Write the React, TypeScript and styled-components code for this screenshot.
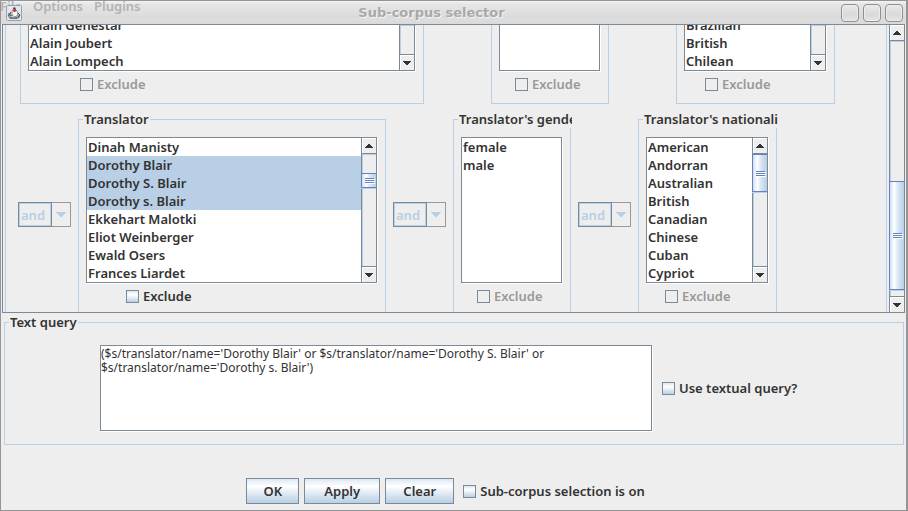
import React, { useState } from 'react';
import styled, { createGlobalStyle, css } from 'styled-components';

const slate = '#7a8a99';
const pale = '#b8cfe5';
const face = '#eeeeee';
const ink = '#333333';
const disabledInk = '#999999';
const thumbEdge = '#6382bf';

const GlobalStyle = createGlobalStyle`
  * { box-sizing: border-box; }
  body {
    margin: 0;
    background: ${face};
    color: ${ink};
    font: 600 13px/18px 'Noto Sans', 'Open Sans', sans-serif;
  }
  button, select, textarea, input { font: inherit; color: inherit; margin: 0; }
`;

const Window = styled.main`
  display: flex;
  flex-direction: column;
  min-height: 100vh;
  border: 1px solid #959595;
  border-right-width: 2px;
`;

const TitleBar = styled.header`
  position: relative;
  display: flex;
  align-items: center;
  height: 23px;
  padding: 0 3px 0 5px;
  background: linear-gradient(#f4f4f4 0, #e6e6e6 3px, #dcdcdc 15px, #d6d6d6 16px, #dedede 17px, #dadada 100%);
`;

const GhostMenu = styled.nav`
  position: absolute;
  left: -1px;
  top: -1px;
  display: flex;
  gap: 11px;
  line-height: 12px;
  color: #b2b2b2;
`;

const AppIcon = styled.svg`
  position: relative;
  flex: none;
`;

const Title = styled.h1`
  position: relative;
  flex: 1;
  margin: 0;
  text-align: center;
  font: bold 13px/16px 'DejaVu Sans', sans-serif;
  color: #a9a9a9;
  text-shadow: 1px 1px 0 #f5f5f5;
`;

const WindowButtons = styled.div`
  display: flex;
  gap: 4px;
`;

const WindowButton = styled.button`
  width: 18px;
  height: 18px;
  padding: 0;
  border: 1px solid #8f8f8f;
  border-radius: 4px;
  background: linear-gradient(#e9e9e9, #d9d9d9 60%, #e6e6e6);
  box-shadow: inset 0 0 0 1px #ededed;
`;

const ScrollPane = styled.section`
  display: flex;
  flex: 1;
  margin: 0 1px;
  border: 1px solid ${slate};
  min-height: 0;
`;

const Viewport = styled.div`
  display: flex;
  flex-direction: column;
  flex: 1;
  min-width: 0;
  margin: 0 2px;
  border: solid ${pale};
  border-width: 0 1px;
  overflow: hidden;
`;

const FilterRow = styled.div<{ $indent: number; $gap: number }>`
  display: flex;
  align-items: stretch;
  gap: ${p => p.$gap}px;
  padding-left: ${p => p.$indent}px;
`;

const UpperRow = styled(FilterRow)`
  margin-bottom: 8px;
`;

const LowerRow = styled(FilterRow)`
  flex: 1;
  align-items: stretch;
`;

const Group = styled.section<{ $width: number; $open?: boolean }>`
  position: relative;
  display: flex;
  flex-direction: column;
  width: ${p => p.$width}px;
  padding: 0 8px 5px 7px;
  border: 1px solid ${pale};
  border-top-width: 0;
  ${p =>
    p.$open &&
    css`
      margin-top: 7px;
      padding-top: 17px;
      padding-bottom: 0;
      border-top-width: 1px;
      border-bottom-width: 0;
    `}
`;

const GroupTitle = styled.h2`
  position: absolute;
  left: 4px;
  top: -9px;
  max-width: calc(100% - 2px);
  height: 17px;
  margin: 0;
  padding: 0 1px;
  overflow: hidden;
  white-space: nowrap;
  font: inherit;
  line-height: 17px;
  background: ${face};
`;

const ListFrame = styled.div<{ $cut?: boolean }>`
  display: flex;
  height: ${p => (p.$cut ? 46 : 146)}px;
  border: 1px solid ${slate};
  border-top-width: ${p => (p.$cut ? 0 : 1)}px;
  background: #fff;
  box-shadow: 1px 1px 0 #fff;
`;

const List = styled.ul<{ $cut?: boolean }>`
  display: flex;
  flex-direction: column;
  justify-content: ${p => (p.$cut ? 'flex-end' : 'flex-start')};
  flex: 1;
  min-width: 0;
  margin: 0;
  padding: 0;
  list-style: none;
  overflow: hidden;
`;

const Item = styled.li<{ $on: boolean }>`
  flex: none;
  height: 18px;
  padding-left: 1px;
  line-height: 19px;
  white-space: nowrap;
  cursor: default;
  background: ${p => (p.$on ? pale : 'transparent')};
`;

const Bar = styled.div`
  display: flex;
  flex-direction: column;
  width: 15px;
  border-left: 1px solid ${slate};
  background: ${face};
`;

const Arrow = styled.button<{ $down?: boolean }>`
  display: flex;
  align-items: center;
  justify-content: center;
  flex: none;
  height: 16px;
  padding: 0;
  border: 0 solid ${slate};
  border-width: ${p => (p.$down ? '1px 0 0' : '0 0 1px')};
  background: ${face};
  box-shadow: inset 1px 1px 0 #fff;
`;

const Track = styled.div<{ $lead: number }>`
  flex: 1;
  display: flex;
  flex-direction: column;
  padding-top: ${p => p.$lead}px;
  box-shadow: inset 1px 1px 0 ${pale};
`;

const Thumb = styled.div<{ $size: number }>`
  display: flex;
  flex-direction: column;
  align-items: center;
  justify-content: center;
  gap: 1px;
  height: ${p => p.$size}px;
  margin-left: -1px;
  border: 1px solid ${thumbEdge};
  border-right-width: 0;
  background: linear-gradient(90deg, #cfdfee, #ffffff 30%, #dbe7f3 55%, ${pale});
  box-shadow: 0 1px 0 ${pale};
`;

const Grip = styled.span`
  width: 9px;
  height: 1px;
  background: ${thumbEdge};
  box-shadow: 1px 1px 0 #fff;
`;

const CheckLabel = styled.label<{ $off?: boolean }>`
  display: flex;
  align-items: center;
  gap: 4px;
  white-space: nowrap;
  color: ${p => (p.$off ? disabledInk : ink)};
`;

const CheckRow = styled.div<{ $indent: number }>`
  padding: 4px 0 5px ${p => p.$indent}px;
`;

const CheckBox = styled.input`
  appearance: none;
  width: 13px;
  height: 13px;
  border: 1px solid ${slate};
  background: linear-gradient(#dde8f3, #ffffff 35%, ${pale});
  &:disabled { background: ${face}; }
  &:checked { background: ${slate}; }
`;

const Operator = styled.div`
  position: relative;
  align-self: flex-start;
  width: 53px;
  height: 25px;
  margin-top: 90px;
  flex: none;
`;

const OperatorSelect = styled.select`
  appearance: none;
  width: 100%;
  height: 100%;
  padding: 0 0 0 2px;
  border: 1px solid ${disabledInk};
  border-radius: 0;
  background: linear-gradient(${disabledInk}, ${disabledInk}) 32px 0 / 1px 100% no-repeat ${face};
  &:disabled { color: ${pale}; opacity: 1; }
`;

const OperatorRing = styled.span`
  position: absolute;
  inset: 0 19px 0 0;
  border: 1px solid ${slate};
  box-shadow: inset 0 0 0 1px ${pale};
  pointer-events: none;
`;

const OperatorArrow = styled.svg`
  position: absolute;
  right: 5px;
  top: 10px;
  pointer-events: none;
`;

const QueryGroup = styled.section`
  position: relative;
  display: flex;
  align-items: center;
  gap: 10px;
  height: 123px;
  margin: 9px 2px 0 3px;
  padding: 22px 8px 13px 95px;
  border: 1px solid ${pale};
`;

const QueryText = styled.textarea`
  flex: 1;
  align-self: stretch;
  min-width: 0;
  padding: 1px 0;
  border: 1px solid ${slate};
  border-radius: 0;
  outline: none;
  resize: none;
  background: #fff;
  box-shadow: 1px 1px 0 #fff;
  font: 400 12px/14px 'Noto Sans', sans-serif;
`;

const QuerySide = styled.div`
  flex: none;
  width: 233px;
`;

const Footer = styled.footer`
  display: flex;
  justify-content: center;
  align-items: center;
  gap: 5px;
  padding: 33px 0 6px;
`;

const PushButton = styled.button<{ $width: number }>`
  width: ${p => p.$width}px;
  height: 26px;
  padding: 0;
  border: 1px solid ${slate};
  background: linear-gradient(#dde8f3, #ffffff 30%, #dbe6f1 65%, ${pale});
`;

const FooterCheck = styled.div`
  padding: 0 16px 0 4px;
`;

function ArrowButton({ down }: { down?: boolean }) {
  return (
    <Arrow $down={down} type="button" aria-label={down ? 'Scroll down' : 'Scroll up'}>
      <svg width="8" height="4" viewBox="0 0 8 4" shapeRendering="crispEdges" fill={ink}>
        <path d={down ? 'M0 0h8v1H7v1H6v1H5v1H3V3H2V2H1V1H0z' : 'M0 4h8V3H7V2H6V1H5V0H3v1H2v1H1v1H0z'} />
      </svg>
    </Arrow>
  );
}

interface BarSpec { lead: number; size: number }

function ScrollBar({ spec, cut }: { spec?: BarSpec; cut?: boolean }) {
  return (
    <Bar>
      {!cut && <ArrowButton />}
      <Track $lead={spec ? spec.lead : 0}>
        {spec && (
          <Thumb $size={spec.size}>
            <Grip /><Grip /><Grip />
          </Thumb>
        )}
      </Track>
      <ArrowButton down />
    </Bar>
  );
}

interface FilterProps {
  title: string;
  width: number;
  items: string[];
  selected?: string[];
  checkIndent: number;
  cut?: boolean;
  bar?: boolean;
  spec?: BarSpec;
  enabled?: boolean;
}

function Filter({ title, width, items, selected = [], checkIndent, cut, bar, spec, enabled }: FilterProps) {
  const [chosen, setChosen] = useState(selected);
  const toggle = (name: string) =>
    setChosen(c => (c.includes(name) ? c.filter(n => n !== name) : [...c, name]));
  return (
    <Group $width={width} $open={!cut} aria-label={title}>
      {!cut && <GroupTitle>{title}</GroupTitle>}
      <ListFrame $cut={cut}>
        <List $cut={cut} role="listbox" aria-multiselectable aria-label={title}>
          {items.map(name => (
            <Item
              key={name}
              role="option"
              aria-selected={chosen.includes(name)}
              $on={chosen.includes(name)}
              onClick={() => toggle(name)}
            >
              {name}
            </Item>
          ))}
        </List>
        {bar && <ScrollBar cut={cut} spec={spec} />}
      </ListFrame>
      <CheckRow $indent={checkIndent}>
        <CheckLabel $off={!enabled}>
          <CheckBox type="checkbox" disabled={!enabled} />
          Exclude
        </CheckLabel>
      </CheckRow>
    </Group>
  );
}

function OperatorBox() {
  return (
    <Operator>
      <OperatorSelect disabled aria-label="Operator" defaultValue="and">
        <option>and</option>
        <option>or</option>
      </OperatorSelect>
      <OperatorRing />
      <OperatorArrow width="10" height="5" viewBox="0 0 10 5" shapeRendering="crispEdges">
        <path d="M0 0h10v1H9v1H8v1H7v1H6v1H4V4H3V3H2V2H1V1H0z" fill={pale} />
      </OperatorArrow>
    </Operator>
  );
}

const query =
  "($s/translator/name='Dorothy Blair' or $s/translator/name='Dorothy S. Blair' or\n$s/translator/name='Dorothy s. Blair')";

export default function App() {
  const [text, setText] = useState(query);
  return (
    <>
      <GlobalStyle />
      <Window>
        <TitleBar>
          <GhostMenu>
            <span>File</span>
            <span>Options</span>
            <span>Plugins</span>
          </GhostMenu>
          <AppIcon width="16" height="16" viewBox="0 0 16 16">
            <rect x="0.5" y="0.5" width="15" height="15" rx="1" fill="#e4e6e8" stroke="#8fa3b5" />
            <path d="M2 8h3v4l4 1 4-4h1v3l-2 2H4l-2-2z" fill="#9a9fa3" />
            <path d="M6 6l2-3 3 3 1 4-3 2-3-2z" fill="#fafafa" stroke="#8b8f92" />
            <path d="M7 3l2-1 1 3-1 1z" fill="#33393d" />
            <circle cx="8.5" cy="5.5" r="1.6" fill="#cf3a34" />
            <path d="M2 11l3-4M12 8l2 2-2 3M4 13h7M4 10l2 1" stroke="#454b50" fill="none" />
          </AppIcon>
          <Title>Sub-corpus selector</Title>
          <WindowButtons>
            <WindowButton type="button" aria-label="Minimize" />
            <WindowButton type="button" aria-label="Maximize" />
            <WindowButton type="button" aria-label="Close" />
          </WindowButtons>
        </TitleBar>

        <ScrollPane>
          <Viewport>
            <UpperRow $indent={14} $gap={67}>
              <Filter title="Author" width={404} checkIndent={52} cut bar
                items={['Alain Genestar', 'Alain Joubert', 'Alain Lompech']} />
              <Filter title="Author's gender" width={118} checkIndent={16} cut items={[]} />
              <Filter title="Author's nationality" width={159} checkIndent={21} cut bar
                items={['Brazilian', 'British', 'Chilean']} />
            </UpperRow>
            <LowerRow $indent={12} $gap={7}>
              <OperatorBox />
              <Filter title="Translator" width={308} checkIndent={40} bar enabled
                spec={{ lead: 19, size: 15 }}
                selected={['Dorothy Blair', 'Dorothy S. Blair', 'Dorothy s. Blair']}
                items={['Dinah Manisty', 'Dorothy Blair', 'Dorothy S. Blair', 'Dorothy s. Blair',
                  'Ekkehart Malotki', 'Eliot Weinberger', 'Ewald Osers', 'Frances Liardet']} />
              <OperatorBox />
              <Filter title="Translator's gender" width={118} checkIndent={16} items={['female', 'male']} />
              <OperatorBox />
              <Filter title="Translator's nationality" width={139} checkIndent={19} bar
                spec={{ lead: 0, size: 38 }}
                items={['American', 'Andorran', 'Australian', 'British', 'Canadian', 'Chinese', 'Cuban', 'Cypriot']} />
            </LowerRow>
          </Viewport>
          <ScrollBar spec={{ lead: 140, size: 109 }} />
        </ScrollPane>

        <QueryGroup>
          <GroupTitle>Text query</GroupTitle>
          <QueryText aria-label="Text query" spellCheck={false} value={text} onChange={e => setText(e.target.value)} />
          <QuerySide>
            <CheckLabel>
              <CheckBox type="checkbox" />
              Use textual query?
            </CheckLabel>
          </QuerySide>
        </QueryGroup>

        <Footer>
          <PushButton type="button" $width={53}>OK</PushButton>
          <PushButton type="button" $width={76}>Apply</PushButton>
          <PushButton type="button" $width={69}>Clear</PushButton>
          <FooterCheck>
            <CheckLabel>
              <CheckBox type="checkbox" />
              Sub-corpus selection is on
            </CheckLabel>
          </FooterCheck>
        </Footer>
      </Window>
    </>
  );
}
